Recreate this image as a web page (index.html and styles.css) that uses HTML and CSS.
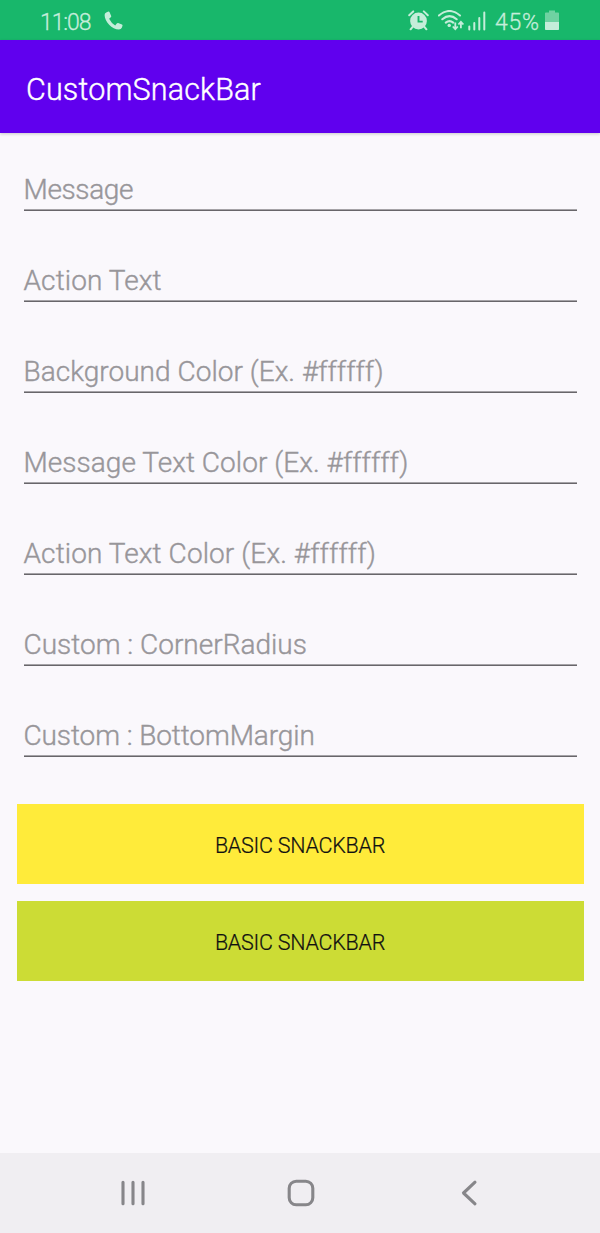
FILE: index.html
```html
<!DOCTYPE html>
<html lang="en">
<head>
<meta charset="utf-8">
<title>CustomSnackBar</title>
<link rel="stylesheet" href="styles.css">
</head>
<body>
<div class="screen">
  <header class="status">
    <span class="clock">11:08</span>
    <svg class="call" width="20" height="20" viewBox="0 0 20 20"><path d="M2.2 1.4 4.4.6Q5.2.5 5.6 1.2L7.2 5Q7.4 5.8 6.8 6.3L5.1 7.7Q7.2 11.9 11.2 14.4L12.8 12.4Q13.4 11.8 14.1 12L18 13.6Q18.7 14 18.5 14.8L17.8 16.8Q17 18.6 15 18.6C8 18.4.6 10.7.6 4Q.6 2.1 2.2 1.4Z"/></svg>
    <svg class="alarm" width="21" height="21" viewBox="0 0 21 21"><path d="M1.2 5.2 5.2 1.4M15.8 1.4l4 3.8M4.6 16.8l-2 2.5M16.4 16.8l2 2.5" class="stroke"/><circle cx="10.5" cy="11" r="8.4"/><path d="M10.5 6v5.6h4.2" class="hands"/></svg>
    <svg class="wifi" width="27" height="21" viewBox="0 0 27 21"><path d="M.9 5.5Q11.5-3.5 22 5.5M4.3 9.2q7.2-6.2 14.4 0M7.8 12.6q3.7-3 7.4 0" class="arc"/><circle cx="11.2" cy="15.4" r="1.7"/><path d="M17.3 12.6V19M14.8 16.5l2.5 2.7 2.5-2.7M22.9 18.2v-6M20.4 14.5l2.5-2.7 2.5 2.7" class="arrows"/></svg>
    <svg class="signal" width="18" height="20" viewBox="0 0 18 20"><path d="M1.3 15.5v3M6.3 12v6.5M11.3 7v11.5M16.3 1.5v17" class="stroke"/></svg>
    <span class="percent">45%</span>
    <svg class="battery" width="14" height="21" viewBox="0 0 14 21"><path d="M0 3.2Q0 2.4.8 2.4H4V.5h6v1.9h3.2q.8 0 .8.8V12H0Z" opacity=".5"/><path d="M0 12h14v7.2q0 .8-.8.8H.8Q0 20 0 19.2Z"/></svg>
  </header>
  <div class="toolbar"><h1 class="title">CustomSnackBar</h1></div>
  <main class="content">
    <div class="field"><span class="hint message">Message</span></div>
    <div class="field"><span class="hint action">Action Text</span></div>
    <div class="field"><span class="hint background">Background Color (Ex. #ffffff)</span></div>
    <div class="field"><span class="hint message-color">Message Text Color (Ex. #ffffff)</span></div>
    <div class="field"><span class="hint action-color">Action Text Color (Ex. #ffffff)</span></div>
    <div class="field"><span class="hint radius">Custom : CornerRadius</span></div>
    <div class="field"><span class="hint margin">Custom : BottomMargin</span></div>
    <div class="buttons">
      <button class="button yellow">BASIC SNACKBAR</button>
      <button class="button lime">BASIC SNACKBAR</button>
    </div>
  </main>
  <nav class="nav">
    <svg width="30" height="30" viewBox="0 0 30 30"><path d="M5 4.2v21.6M15 4.2v21.6M25 4.2v21.6"/></svg>
    <svg width="30" height="30" viewBox="0 0 30 30"><rect x="3.2" y="3.2" width="23.6" height="23.6" rx="7"/></svg>
    <svg width="30" height="30" viewBox="0 0 30 30"><path d="M21 4.2 9.5 15l11.5 10.8"/></svg>
  </nav>
</div>
</body>
</html>
```
FILE: styles.css
```css
* { box-sizing: border-box; }
body { margin: 0; background: #faf8fc; font-family: Roboto, "Liberation Sans", sans-serif; font-weight: 300; }
.screen { width: 600px; height: 1233px; display: flex; flex-direction: column; }
.status { height: 40px; background: #18b76b; color: #c5edda; display: flex; align-items: flex-start; padding: 10px 0 0 40px; font-size: 23px; line-height: 26px; -webkit-text-stroke: 0.3px; }
.status svg { fill: #c5edda; flex: none; }
.status .stroke { fill: none; stroke: #c5edda; stroke-width: 2; stroke-linecap: round; }
.status .hands { fill: none; stroke: #18b76b; stroke-width: 1.9; }
.status .arc { fill: none; stroke: #c5edda; stroke-width: 2.1; stroke-linecap: round; }
.status .arrows { fill: none; stroke: #c5edda; stroke-width: 1.8; }
.clock { width: 64px; letter-spacing: -1.1px; }
.call { margin-top: 1px; }
.alarm { margin-left: 284px; }
.wifi { margin-left: 9px; }
.signal { margin: 1px 0 0 3px; }
.percent { width: 49px; margin-left: 9px; letter-spacing: 0.8px; }
.battery { margin-left: 1px; }
.toolbar { height: 93px; background: #6000ee; display: flex; align-items: center; padding: 7px 0 0 26px; box-shadow: 0 1px 3px #0003; }
.title { margin: 0; color: #fff; font-size: 30.5px; line-height: 36px; font-weight: 300; letter-spacing: 0.15px; -webkit-text-stroke: 0.4px; }
.content { flex: 1; padding: 0 16.5px; }
.field { height: 91px; margin: 0 7px; background: linear-gradient(#a5a3a7 50%, #68666a 50%) bottom / 100% 2px no-repeat; display: flex; align-items: flex-end; padding-bottom: 5px; }
.field:first-child { height: 78px; }
.hint { color: #98969a; font-size: 28px; line-height: 33px; white-space: nowrap; -webkit-text-stroke: 0.4px; }
.message { letter-spacing: -0.35px; }
.action { letter-spacing: 0.1px; }
.background { letter-spacing: 0.03px; }
.message-color { letter-spacing: 0.05px; }
.action-color { letter-spacing: 0.1px; }
.margin { letter-spacing: -0.1px; }
.buttons { padding-top: 47px; display: flex; flex-direction: column; gap: 17px; }
.button { height: 80px; border: 0; padding: 4px 0 0; font: 300 21.5px/26px Roboto, "Liberation Sans", sans-serif; letter-spacing: -0.25px; color: #111; text-align: center; -webkit-text-stroke: 0.2px; }
.yellow { background: #ffeb3a; }
.lime { background: #ccdc35; }
.nav { height: 80px; background: #f0eef2; display: flex; justify-content: space-between; align-items: center; padding: 0 116px 0 118px; }
.nav svg { fill: none; stroke: #87868a; stroke-width: 3.1; stroke-linecap: round; stroke-linejoin: round; }
```
